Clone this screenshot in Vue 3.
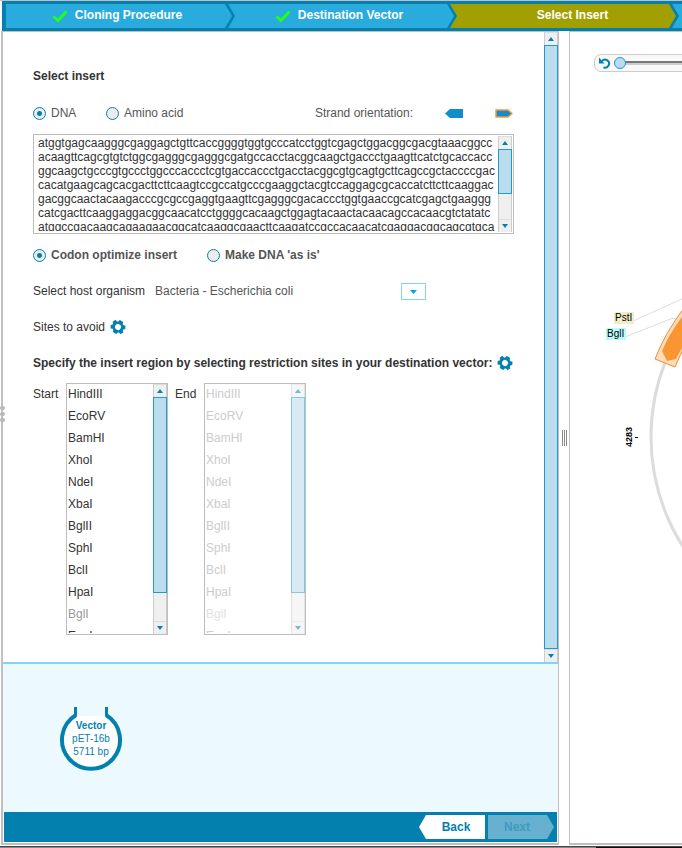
<script setup>
import { reactive, ref } from 'vue'

const steps = [
  { name: 'Cloning Procedure', done: true },
  { name: 'Destination Vector', done: true },
  { name: 'Select Insert', active: true },
  { name: '' },
]
const sequence = ref([
  'atggtgagcaagggcgaggagctgttcaccggggtggtgcccatcctggtcgagctggacggcgacgtaaacggcc',
  'acaagttcagcgtgtctggcgagggcgagggcgatgccacctacggcaagctgaccctgaagttcatctgcaccacc',
  'ggcaagctgcccgtgccctggcccaccctcgtgaccaccctgacctacggcgtgcagtgcttcagccgctaccccgac',
  'cacatgaagcagcacgacttcttcaagtccgccatgcccgaaggctacgtccaggagcgcaccatcttcttcaaggac',
  'gacggcaactacaagacccgcgccgaggtgaagttcgagggcgacaccctggtgaaccgcatcgagctgaaggg',
  'catcgacttcaaggaggacggcaacatcctggggcacaagctggagtacaactacaacagccacaacgtctatatc',
  'atggccgacaagcagaagaacggcatcaaggcgaacttcaagatccgccacaacatcgaggacggcagcgtgca',
].join('\n'))
const kind = ref('dna')
const mode = ref('optimize')
const host = ref('ecoli')
const zoom = ref(0)
const sites = ['HindIII', 'EcoRV', 'BamHI', 'XhoI', 'NdeI', 'XbaI', 'BglII', 'SphI', 'BclI', 'HpaI', 'BglI', 'EagI']
const chosen = reactive({ start: null, end: null })
const lists = [
  { id: 'start', label: 'Start', disabled: false },
  { id: 'end', label: 'End', disabled: true },
]
const gear = 'M5 0h4l.5 2 1.2.7 2-.7 1.6 3-1.4 1.5v1L14.300 9l-1.600 3-2-.7-1.200.7L9 14H5l-.5-2-1.200-.7-2 .7L-.3 9l1.400-1.500v-1L-.3 5l1.600-3 2 .7L4.500 2zM7 4a3 3 0 1 0 0 6a3 3 0 1 0 0-6z'
</script>

<template>
  <div class="window">
    <nav class="steps" aria-label="Steps">
      <a v-for="(s, i) in steps" :key="i" href="#" class="step" :class="{ active: s.active }">
        <span class="step-name">
          <svg v-if="s.done" class="check" viewBox="0 0 16 13" width="16" height="13"><path d="M1.500 6.500L6 10.500L14.500 1.500" fill="none" stroke="#1fff1a" stroke-width="3" /></svg>
          {{ s.name }}
        </span>
      </a>
    </nav>

    <div class="body">
      <main class="left">
        <span class="dots"><i></i><i></i><i></i></span>
        <div class="scroller">
          <form class="content" @submit.prevent>
            <h2>Select insert</h2>

            <div class="row kinds">
              <label class="choice first"><input v-model="kind" type="radio" value="dna" />DNA</label>
              <label class="choice"><input v-model="kind" type="radio" value="aa" />Amino acid</label>
              <span class="strand">Strand orientation:</span>
              <button type="button" class="arrow" aria-label="Reverse strand">
                <svg viewBox="0 0 18 9" width="18" height="9"><path d="M0 4.500L5 0H18V9H5z" fill="#118dca" /></svg>
              </button>
              <button type="button" class="arrow forward" aria-label="Forward strand">
                <svg viewBox="0 0 18 9" width="18" height="9"><path d="M1 1H13L17 4.500L13 8H1z" fill="#118dca" stroke="#f7973a" stroke-width="1.500" /></svg>
              </button>
            </div>

            <div class="box sequence">
              <textarea v-model="sequence" aria-label="Insert sequence" spellcheck="false" wrap="off"></textarea>
              <div class="bar">
                <button type="button" aria-label="Scroll up"><svg viewBox="0 0 6 4" width="6" height="4"><path d="M0 4L3 0L6 4z" /></svg></button>
                <span class="thumb short"></span>
                <button type="button" class="down" aria-label="Scroll down"><svg viewBox="0 0 6 4" width="6" height="4"><path d="M0 0H6L3 4z" /></svg></button>
              </div>
            </div>

            <div class="row modes">
              <label class="choice"><input v-model="mode" type="radio" value="optimize" />Codon optimize insert</label>
              <label class="choice"><input v-model="mode" type="radio" value="asis" />Make DNA 'as is'</label>
            </div>

            <div class="row host">
              <label for="host">Select host organism</label>
              <span class="picker">
                <select id="host" v-model="host"><option value="ecoli">Bacteria - Escherichia coli</option></select>
                <span class="drop"><svg viewBox="0 0 7 4" width="7" height="4"><path d="M0 0H7L3.500 4z" fill="#00a3e6" /></svg></span>
              </span>
            </div>

            <div class="row">
              <span>Sites to avoid</span>
              <button type="button" class="gear" aria-label="Configure sites"><svg viewBox="-1 0 16 14" width="16" height="14"><path :d="gear" transform="rotate(30 7 7)" fill="#0380ae" fill-rule="evenodd" /></svg></button>
            </div>

            <div class="row">
              <h2>Specify the insert region by selecting restriction sites in your destination vector:</h2>
              <button type="button" class="gear" aria-label="Configure region"><svg viewBox="-1 0 16 14" width="16" height="14"><path :d="gear" transform="rotate(30 7 7)" fill="#0380ae" fill-rule="evenodd" /></svg></button>
            </div>

            <div class="lists">
              <template v-for="l in lists" :key="l.id">
                <label :for="l.id" :class="l.id">{{ l.label }}</label>
                <div class="box list">
                  <select :id="l.id" v-model="chosen[l.id]" size="11" :disabled="l.disabled">
                    <option v-for="s in sites" :key="s" :disabled="s === 'BglI'">{{ s }}</option>
                  </select>
                  <div class="bar" :class="{ faded: l.disabled }">
                    <button type="button" :disabled="l.disabled" aria-label="Scroll up"><svg viewBox="0 0 6 4" width="6" height="4"><path d="M0 4L3 0L6 4z" /></svg></button>
                    <span class="thumb long"></span>
                    <button type="button" class="down" :disabled="l.disabled" aria-label="Scroll down"><svg viewBox="0 0 6 4" width="6" height="4"><path d="M0 0H6L3 4z" /></svg></button>
                  </div>
                </div>
              </template>
            </div>
          </form>
          <div class="bar">
            <button type="button" aria-label="Scroll up"><svg viewBox="0 0 6 4" width="6" height="4"><path d="M0 4L3 0L6 4z" /></svg></button>
            <span class="thumb"></span>
            <button type="button" class="down" aria-label="Scroll down"><svg viewBox="0 0 6 4" width="6" height="4"><path d="M0 0H6L3 4z" /></svg></button>
          </div>
        </div>

        <section class="summary">
          <svg viewBox="0 0 64 64" width="64" height="64">
            <circle cx="32" cy="32" r="29" fill="#fff" />
            <path d="M17 8A29 29 0 1 0 47 8" fill="none" stroke="#0380ae" stroke-width="4" />
            <path d="M18 0H46V8L43 9H21L18 8z" fill="#ecfaff" />
            <path d="M16.500 0V9M47.500 0V9" stroke="#0380ae" stroke-width="3" />
            <g fill="#0380ae" text-anchor="middle">
              <text x="32" y="22" font-weight="bold">Vector</text>
              <text x="32" y="35">pET-16b</text>
              <text x="32" y="48">5711 bp</text>
            </g>
          </svg>
        </section>

        <footer>
          <button type="button" class="back">Back</button>
          <button type="button" class="next" disabled>Next</button>
        </footer>
      </main>

      <div class="splitter"><i></i><i></i><i></i></div>

      <section class="right">
        <svg class="map" viewBox="570 32 112 812" width="112" height="812">
          <circle cx="855" cy="437" r="204" fill="none" stroke="#dcdcdc" stroke-width="3" />
          <path d="M633 321L682 299M625 337L673 318L682 321" fill="none" stroke="#dcdcdc" />
          <path d="M655 359Q665 333 684 308L700 320Q684 345 675 367z" fill="#fddcbd" stroke="#f28c28" />
          <path d="M662 351Q669 334 684 314L700 324Q684 342 676 359L667 361z" fill="#f99631" />
          <rect x="614" y="312" width="20" height="12" fill="#f0eec8" />
          <rect x="606" y="328" width="20" height="12" fill="#b9fbfb" />
          <text x="615" y="321">PstI</text>
          <text x="607" y="337">BglI</text>
          <text class="tick" transform="translate(632 447) rotate(-90)">4283</text>
          <path d="M635 437.500H638" stroke="#000" />
        </svg>
        <div class="tools">
          <button type="button" aria-label="Reset view">
            <svg viewBox="0 0 12 12" width="12" height="12"><path d="M3 4A4 4 0 1 1 4.500 10.300" fill="none" stroke="#0380ae" stroke-width="2" /><path d="M0 .5V6.500H5.500z" fill="#0380ae" /></svg>
          </button>
          <input v-model="zoom" type="range" min="0" max="100" aria-label="Zoom" />
        </div>
      </section>
    </div>
    <div class="edge"><i></i></div>
  </div>
</template>

<style>
body {
  margin: 0;
  background: #fff;
}
</style>

<style scoped>
* {
  box-sizing: border-box;
}
.window {
  display: flex;
  flex-direction: column;
  min-height: 100vh;
  overflow: hidden;
  border-top: 1px solid #c4bec0;
  font: 12px/18px "Liberation Sans", Arial, sans-serif;
  color: #333;
}
button {
  font: inherit;
  border: 0;
  padding: 0;
  background: none;
}
svg {
  display: block;
}
.steps {
  display: flex;
  flex: none;
  height: 30px;
  margin-left: 2px;
  padding: 3px 0 3px 4px;
  background: #0380ae;
  overflow: hidden;
}
.step {
  flex: 1 0 226px;
  padding-left: 19px;
  background: #2aabdd;
  color: #fff;
  font-weight: bold;
  line-height: 22px;
  text-align: center;
  text-decoration: none;
  clip-path: polygon(0 0, calc(100% - 7px) 0, 100% 50%, calc(100% - 7px) 100%, 0 100%, 7px 50%);
}
.step:first-child {
  clip-path: polygon(0 0, calc(100% - 7px) 0, 100% 50%, calc(100% - 7px) 100%, 0 100%);
}
.step + .step {
  margin-left: -4px;
}
.step.active {
  background: #a1a000;
}
.step-name {
  position: relative;
}
.check {
  position: absolute;
  right: calc(100% + 7px);
  top: 2px;
}
.body {
  display: grid;
  flex: 1;
  grid-template-columns: minmax(0, 558fr) 10px minmax(0, 113fr);
  margin-left: 1px;
}
.left {
  position: relative;
  display: flex;
  flex-direction: column;
  border: solid #c4bec0;
  border-width: 1px 1px 2px 2px;
}
.dots {
  position: absolute;
  left: -3px;
  top: 374px;
  display: grid;
  gap: 2px;
}
.dots i {
  width: 5px;
  height: 4px;
  border-radius: 2px;
  background: #b8b8b8;
}
.scroller {
  display: flex;
  flex: 1;
}
.content {
  flex: 1;
  min-width: 0;
  padding: 35px 30px 27px;
}
h2 {
  margin: 0;
  font-size: 12px;
  line-height: 18px;
}
.row {
  display: flex;
  align-items: center;
  height: 18px;
  margin-top: 18px;
}
.kinds {
  margin-top: 19px;
  color: #555;
}
.choice {
  display: flex;
  align-items: center;
  gap: 5px;
}
.choice.first {
  width: 73px;
}
input[type="radio"] {
  appearance: none;
  width: 13px;
  height: 13px;
  margin: 0;
  border: 1px solid #0380ae;
  border-radius: 50%;
  background: #ececec;
}
input[type="radio"]:checked {
  background: radial-gradient(circle, #0380ae 2px, #ececec 3px);
}
.strand {
  margin-left: auto;
}
.arrow {
  margin-left: 32px;
}
.arrow.forward {
  margin-right: 1px;
}
.box {
  display: flex;
  border: 1px solid #bdbdbd;
}
.sequence {
  height: 100px;
  margin-top: 12px;
  padding: 1px;
}
textarea {
  flex: 1;
  min-width: 0;
  margin: 0 0 1px;
  padding: 0 0 0 3px;
  border: 0;
  outline: 0;
  background: none;
  resize: none;
  overflow: hidden;
  color: #333;
  font: inherit;
  line-height: 14px;
}
.bar {
  display: flex;
  flex: none;
  flex-direction: column;
  width: 14px;
  border: solid #ccc;
  border-width: 0 1px;
  background: #efefef;
}
.bar button {
  display: flex;
  flex: none;
  align-items: center;
  justify-content: center;
  height: 13px;
  border-top: 1px solid #ddd;
  fill: #0380ae;
}
.bar .down {
  margin-top: auto;
}
.thumb {
  flex: 1;
  margin: 0 -1px;
  border: 1px solid #1f9bd0;
  background: #badcec;
}
.thumb.short {
  flex: 0 0 47%;
}
.thumb.long {
  flex: 0 0 196px;
}
.faded {
  opacity: 0.55;
}
.modes {
  gap: 30px;
  margin-top: 12px;
  color: #555;
  font-weight: bold;
}
.host {
  gap: 10px;
}
.picker {
  position: relative;
  width: 271px;
}
.picker select {
  appearance: none;
  display: block;
  width: 100%;
  height: 18px;
  padding: 0;
  border: 0;
  background: none;
  color: #555;
  font: inherit;
}
.drop {
  position: absolute;
  top: 1px;
  right: 0;
  display: grid;
  place-items: center;
  width: 25px;
  height: 17px;
  border: 1px solid #7fd4f7;
  background: #fff;
  pointer-events: none;
}
.gear {
  margin-left: 5px;
}
.lists {
  display: flex;
  align-items: flex-start;
  margin-top: 11px;
  line-height: 22px;
}
.lists label {
  width: 33px;
}
.lists .end {
  width: 29px;
}
.list {
  width: 102px;
  height: 252px;
}
.list + label {
  margin-left: 7px;
}
.list select {
  flex: 1;
  min-width: 0;
  height: 249px;
  padding: 0;
  border: 0;
  outline: 0;
  overflow: hidden;
  scrollbar-width: none;
  background: none;
  color: #333;
  font: inherit;
}
.list option {
  height: 22px;
  padding: 3px 1px 0;
}
.list option:disabled {
  color: #999;
}
.list select:disabled {
  opacity: 1;
}
.list select:disabled option {
  color: #ccc;
}
.list select:disabled option:disabled {
  color: #e2e2e2;
}
.summary {
  flex: none;
  height: 150px;
  padding: 43px 56px 0;
  border-top: 2px solid #7fd4f7;
  background: #ecfaff;
  font-size: 10px;
}
footer {
  display: flex;
  flex: none;
  justify-content: flex-end;
  gap: 3px;
  height: 30px;
  margin: 0 1px 1px;
  padding: 3px;
  background: #0380ae;
}
footer button {
  width: 66px;
  font-weight: bold;
}
.back {
  padding-left: 8px;
  background: #fff;
  color: #0380ae;
  clip-path: polygon(7px 0, 100% 0, 100% 100%, 7px 100%, 0 50%);
}
.next {
  padding-right: 8px;
  background: #68b0cf;
  color: #3e9bc3;
  clip-path: polygon(0 0, calc(100% - 7px) 0, 100% 50%, calc(100% - 7px) 100%, 0 100%);
}
.splitter {
  display: flex;
  align-items: center;
  justify-content: center;
  gap: 1px;
}
.splitter i {
  width: 1px;
  height: 16px;
  background: #888;
}
.right {
  position: relative;
  overflow: hidden;
  border: solid #c4bec0;
  border-width: 1px 0 2px 1px;
  padding: 22px 0 0 24px;
}
.map {
  position: absolute;
  left: 0;
  top: 0;
  overflow: visible;
  font-size: 10px;
}
.tick {
  font-size: 9px;
  font-weight: bold;
}
.tools {
  position: relative;
  display: flex;
  align-items: center;
  gap: 3px;
  width: 200px;
  height: 18px;
  padding-left: 4px;
  border: 1px solid #ccc;
  border-radius: 7px;
  background: #f8f8f8;
}
input[type="range"] {
  appearance: none;
  flex: 1;
  height: 12px;
  margin: 0;
  background: linear-gradient(transparent 4px, #777 4px, #777 6px, #ccc 6px, #ccc 8px, transparent 8px);
}
input[type="range"]::-webkit-slider-thumb {
  appearance: none;
  width: 12px;
  height: 12px;
  border: 1px solid #1f9bd0;
  border-radius: 50%;
  background: #badcec;
}
.edge {
  flex: none;
  display: grid;
  grid-template-columns: 596fr 86fr;
  height: 2px;
  margin-top: 1px;
  border-top: 1px solid #444;
  background: #888;
}
.edge i {
  grid-column: 2;
  background: #120c16;
}
</style>
